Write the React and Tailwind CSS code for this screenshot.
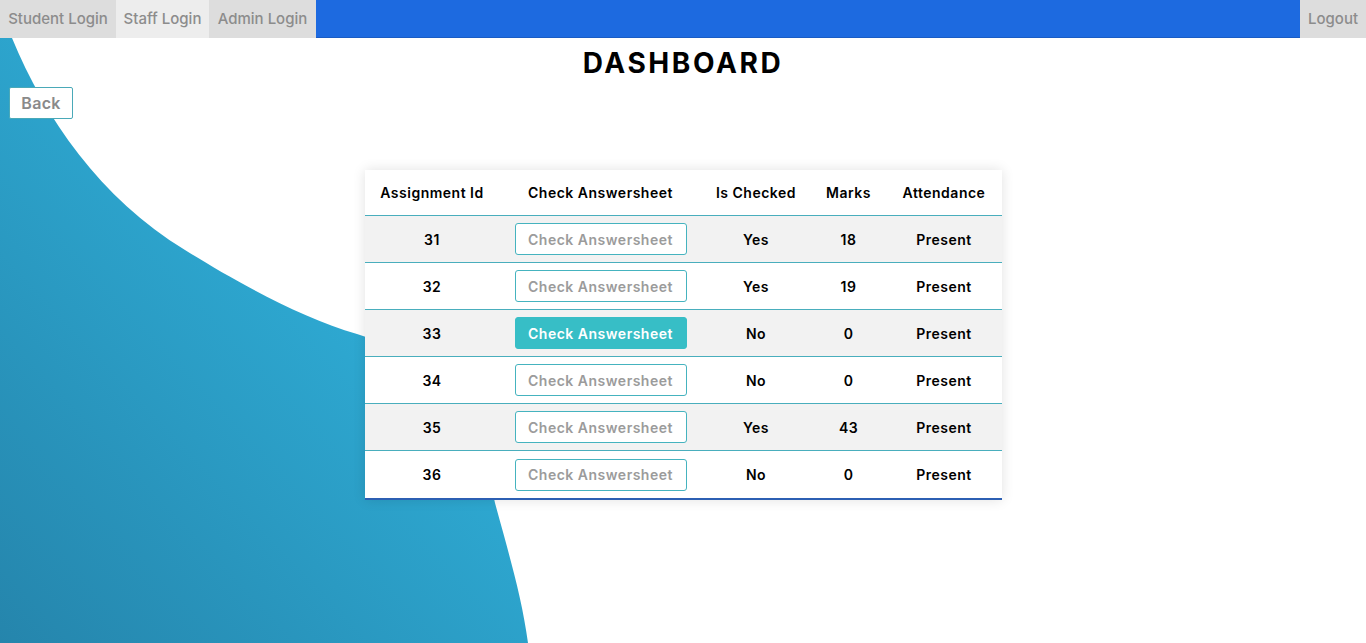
const rows = [
  { id: 31, checked: "Yes", marks: 18, att: "Present" },
  { id: 32, checked: "Yes", marks: 19, att: "Present" },
  { id: 33, checked: "No", marks: 0, att: "Present", active: true },
  { id: 34, checked: "No", marks: 0, att: "Present" },
  { id: 35, checked: "Yes", marks: 43, att: "Present" },
  { id: 36, checked: "No", marks: 0, att: "Present" },
];

function Blob() {
  // decorative wave on the left side
  return (
    <svg
      className="absolute left-0 top-[38px] pointer-events-none"
      width="540"
      height="605"
      viewBox="0 0 540 605"
    >
      <defs>
        <linearGradient id="blobGrad" x1="0.6" y1="0.35" x2="0" y2="1">
          <stop offset="0" stopColor="#2eaad3" />
          <stop offset="1" stopColor="#2585ac" />
        </linearGradient>
      </defs>
      <path
        d="M0 0 L12 0 C45 80 100 160 185 212 C230 240 300 280 357 296 C430 318 480 380 495 465 C510 520 522 560 528 605 L0 605 Z"
        fill="url(#blobGrad)"
      />
    </svg>
  );
}

export default function App() {
  return (
    <div
      className="relative w-full h-[643px] overflow-hidden bg-white"
      style={{ fontFamily: "Inter, 'Noto Sans', sans-serif" }}
    >
      <Blob />

      {/* top nav */}
      <div className="relative flex h-[38px] text-[15px] font-medium text-[#8c8c8c]">
        <div className="bg-[#dddddd] w-[116px] flex items-center justify-center">Student Login</div>
        <div className="bg-[#ededed] w-[93px] flex items-center justify-center">Staff Login</div>
        <div className="bg-[#dddddd] w-[107px] flex items-center justify-center">Admin Login</div>
        <div className="flex-1 bg-[#1d6ae0] border-b border-[#1a5cc4]" />
        <div className="bg-[#dddddd] w-[66px] flex items-center justify-center">Logout</div>
      </div>

      <div className="relative">
        <h1 className="text-center text-[28px] font-bold text-black leading-none pt-[11px] tracking-[2.6px]">DASHBOARD</h1>

        <button className="ml-[9px] mt-[10px] w-[64px] h-[32px] bg-white border border-[#4aa9b8] rounded-[2px] text-[16px] font-semibold tracking-[0.3px] text-[#8a8a8a]">
          Back
        </button>

        <div className="flex justify-center mt-[51px]">
          <div className="w-[637px] bg-white shadow-[0_0_12px_rgba(0,0,0,0.12)] border-b-2 border-[#2c5fb3] tracking-[0.5px]">
            <div className="grid grid-cols-[135px_202px_109px_76px_115px] h-[46px] items-center text-[14px] font-semibold text-black text-center border-b border-[#49aebd]">
              <div>Assignment Id</div>
              <div>Check Answersheet</div>
              <div>Is Checked</div>
              <div>Marks</div>
              <div>Attendance</div>
            </div>
            {rows.map((r, i) => (
              <div
                key={r.id}
                className={
                  "grid grid-cols-[135px_202px_109px_76px_115px] h-[47px] items-center text-[14px] font-semibold text-black text-center " +
                  (i % 2 === 0 ? "bg-[#f2f2f2] " : "bg-white ") +
                  (i < rows.length - 1 ? "border-b border-[#49aebd]" : "")
                }
              >
                <div>{r.id}</div>
                <div className="flex justify-center">
                  {r.active ? (
                    <button className="w-[172px] h-[32px] rounded-[3px] bg-[#37bec6] border border-[#37bec6] text-white text-[14px] font-semibold tracking-[0.5px]">
                      Check Answersheet
                    </button>
                  ) : (
                    <button className="w-[172px] h-[32px] rounded-[3px] bg-white border border-[#45b3bf] text-[#9b9b9b] text-[14px] font-semibold tracking-[0.5px]">
                      Check Answersheet
                    </button>
                  )}
                </div>
                <div>{r.checked}</div>
                <div>{r.marks}</div>
                <div>{r.att}</div>
              </div>
            ))}
          </div>
        </div>
      </div>
    </div>
  );
}
